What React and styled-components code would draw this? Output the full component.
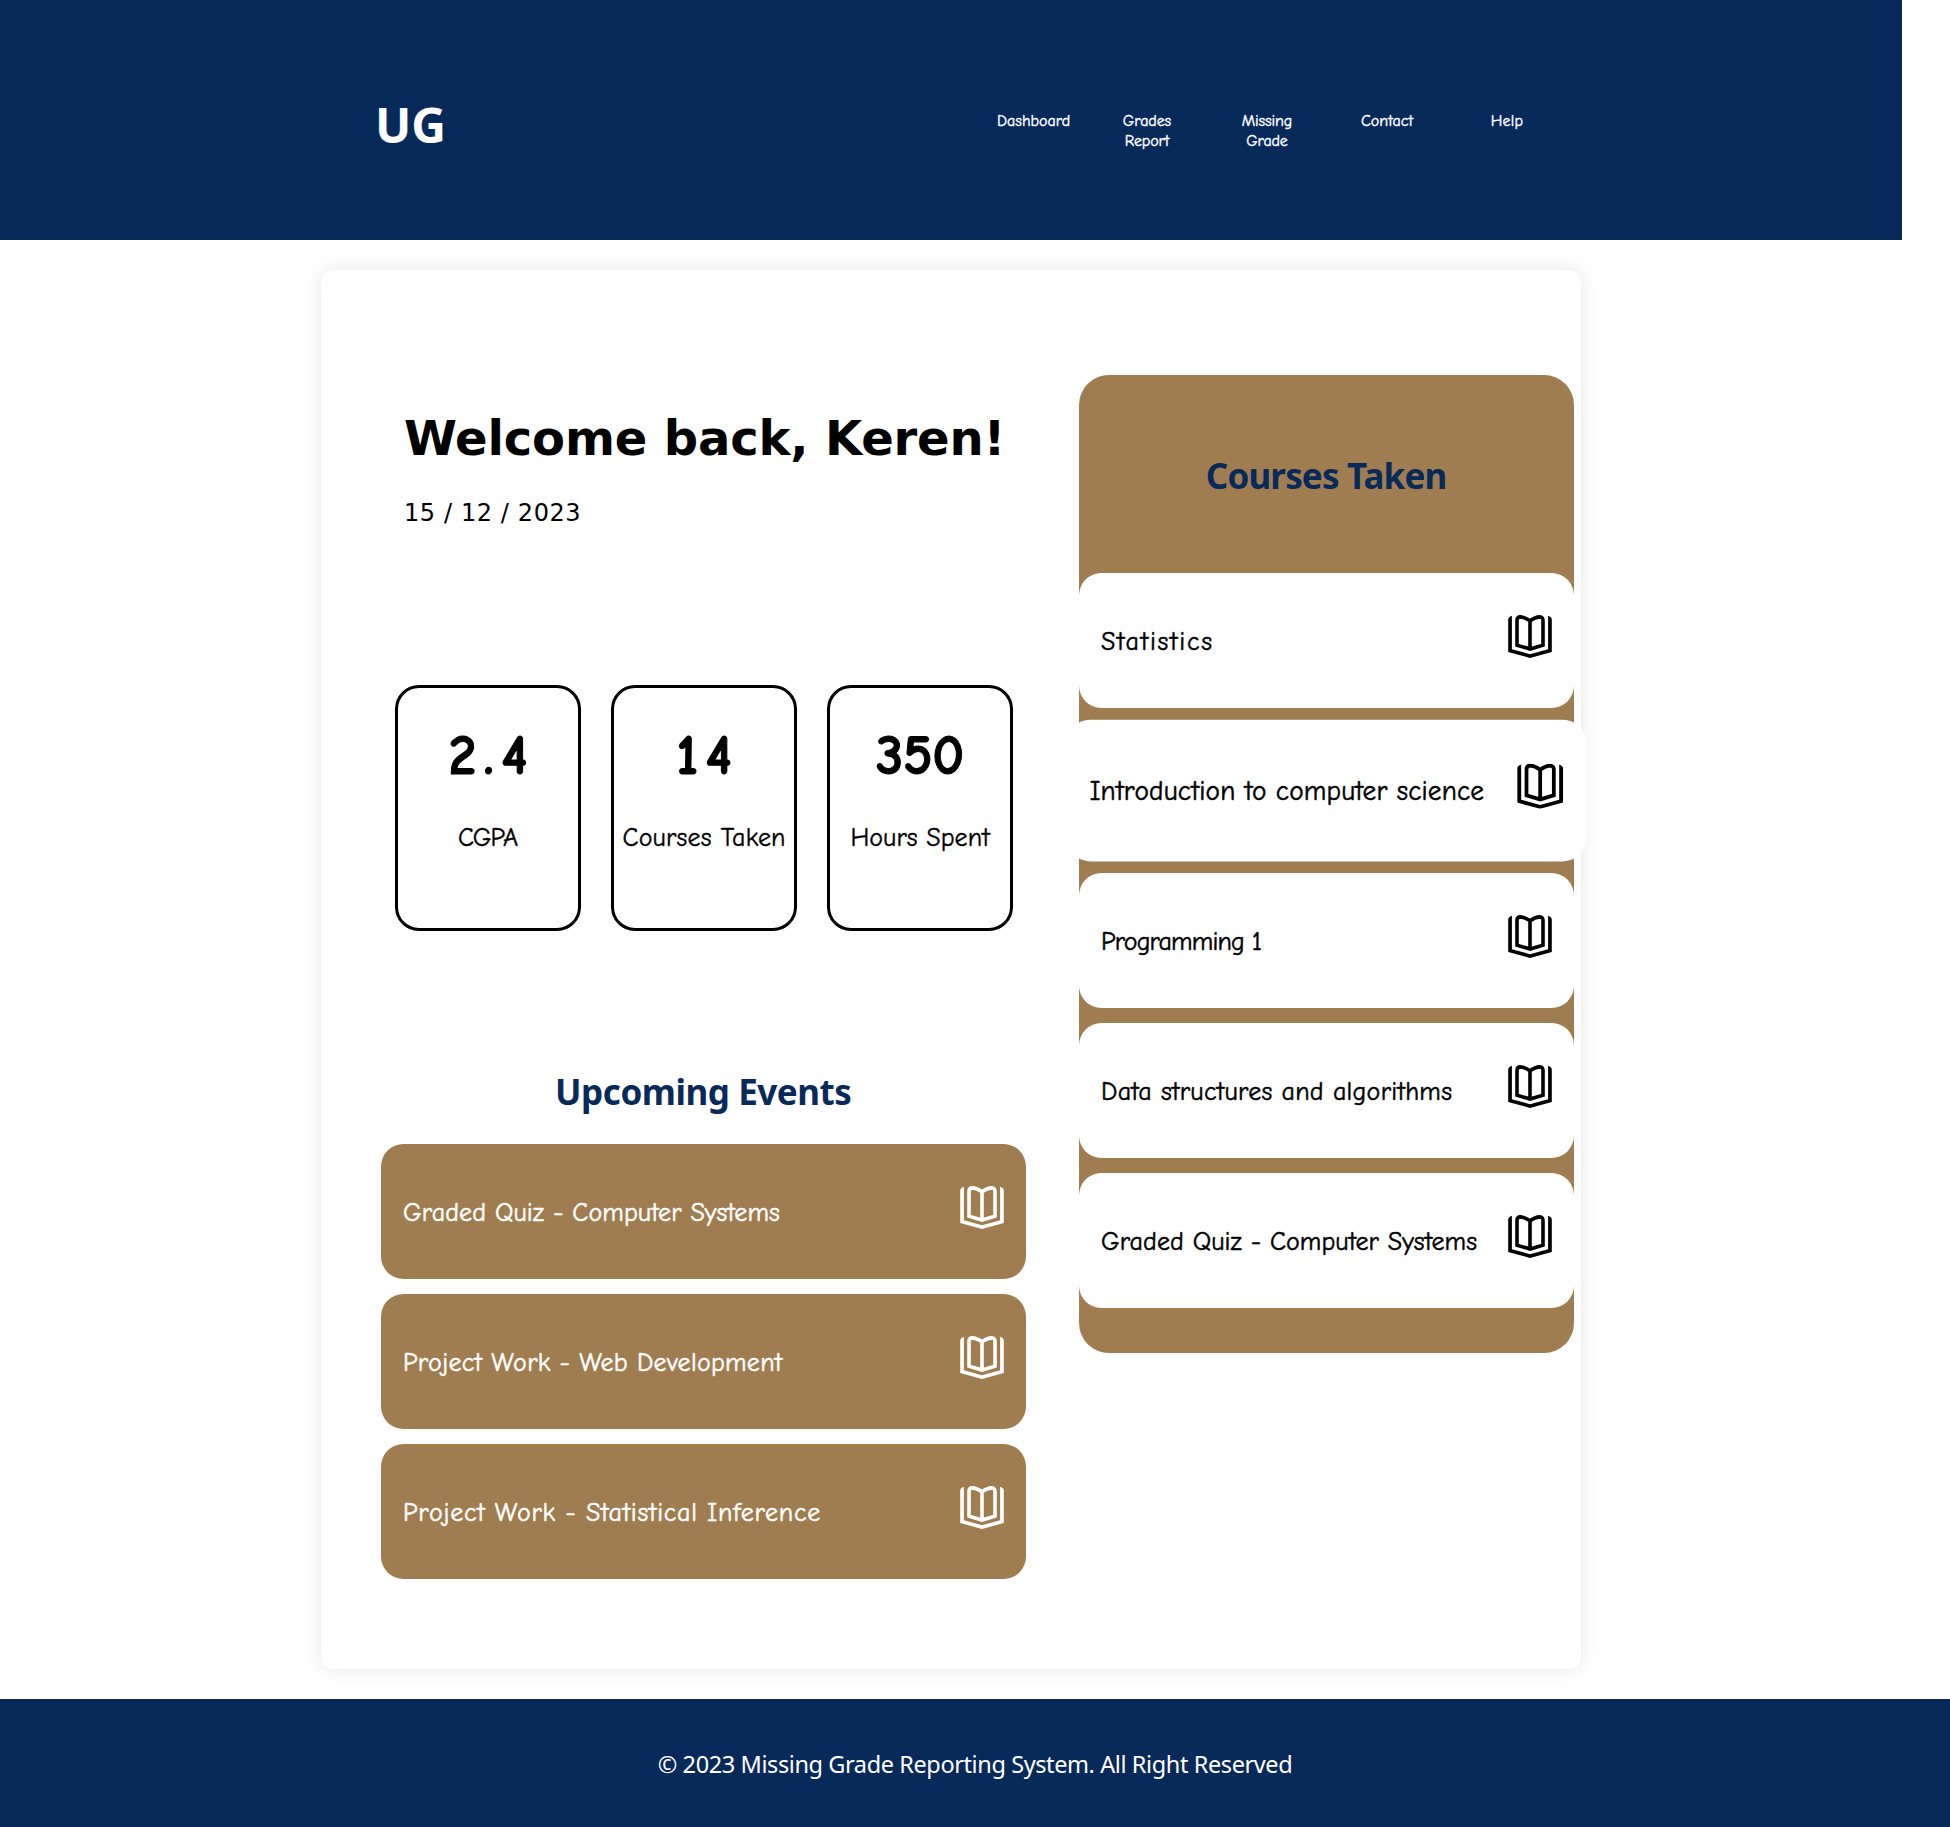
import React from "react";
import styled, { createGlobalStyle, css } from "styled-components";

const navy = "#082a5a";
const brown = "#a07d50";
const handFont = '"Comic Sans MS", "Comic Neue", "Noto Sans", sans-serif';
const uiFont = '"Segoe UI", "Noto Sans", "Open Sans", sans-serif';
const wideFont = 'Verdana, "DejaVu Sans", sans-serif';

const GlobalStyle = createGlobalStyle`
  *, *::before, *::after { box-sizing: border-box; }
  body { margin: 0; background: #fff; color: #000; font-family: ${uiFont}; }
  h1, h2, h3, p, ul { margin: 0; padding: 0; }
  ul { list-style: none; }
`;

/* Letter spacing adds a trailing gap; the indent keeps centred text centred. */
const tracking = css`
  letter-spacing: ${(p) => p.$track || 0}px;
  text-indent: ${(p) => p.$track || 0}px;
`;

const Page = styled.div`
  height: 1827px;
  display: flex;
  flex-direction: column;
`;

const Header = styled.header`
  width: 1902px;
  height: 240px;
  padding: 0 365px 0 375px;
  display: flex;
  justify-content: space-between;
  align-items: flex-start;
  background: ${navy};
  color: #fff;
`;

const Logo = styled.h1`
  margin-top: 93px;
  font: 700 48px/64px ${uiFont};
`;

const Nav = styled.ul`
  margin-top: 111px;
  display: flex;
  gap: 60px;
`;

const NavItem = styled.li`
  width: 60px;
  display: flex;
  justify-content: ${(p) => (p.$wide ? "flex-start" : "center")};
  text-align: center;
  font: 400 16px/20px ${handFont};
  -webkit-text-stroke: 0.4px currentColor;
  letter-spacing: ${(p) => p.$track || 0}px;
`;

const Card = styled.main`
  width: 1260px;
  height: 1399px;
  margin: 30px 0 30px 321px;
  padding: 105px 7px 0 60px;
  display: flex;
  justify-content: space-between;
  align-items: flex-start;
  background: #fff;
  border-radius: 12px;
  box-shadow: 0 0 20px rgba(0, 0, 0, 0.1);
`;

const Main = styled.div`
  width: 645px;
`;

const Welcome = styled.section`
  height: 310px;
  padding: 34px 0 0 23px;
  font-family: ${wideFont};
`;

const Greeting = styled.h1`
  font: 700 48px/58px ${wideFont};
  letter-spacing: -0.15px;
  white-space: nowrap;
`;

const DateLine = styled.p`
  margin-top: 31px;
  font: 400 24px/30px ${wideFont};
  letter-spacing: 0.6px;
`;

const Stats = styled.section`
  padding: 0 13px 0 14px;
  display: flex;
  gap: 30px;
`;

const Stat = styled.div`
  flex: 1;
  height: 246px;
  padding-top: 36px;
  border: 3px solid #000;
  border-radius: 24px;
  text-align: center;
`;

const StatValue = styled.h2`
  font: 700 56px/64px ${handFont};
  -webkit-text-stroke: 1px currentColor;
  ${tracking}
`;

const StatLabel = styled.p`
  margin-top: 34px;
  font: 400 26px/32px ${handFont};
  -webkit-text-stroke: 0.4px currentColor;
  ${tracking}
  white-space: nowrap;
`;

const Title = styled.h2`
  color: ${navy};
  font: 700 35px/48px ${uiFont};
  ${tracking}
  text-align: center;
`;

const Events = styled.section`
  margin-top: 137px;
`;

const List = styled.div`
  margin-top: ${(p) => p.$top}px;
  display: flex;
  flex-direction: column;
  gap: 15px;
`;

const Row = styled.article`
  height: 135px;
  padding: 0 22px;
  display: flex;
  align-items: center;
  justify-content: space-between;
  border-radius: 22.5px;
  background: ${(p) => (p.$dark ? brown : "#fff")};
  color: ${(p) => (p.$dark ? "#fff" : "#000")};
  ${(p) => p.$active && css`transform: scale(1.05);`}
`;

const RowText = styled.h3`
  padding-top: 2px;
  font: 400 26px/32px ${handFont};
  -webkit-text-stroke: 0.5px currentColor;
  letter-spacing: ${(p) => p.$track || 0}px;
  white-space: nowrap;
`;

const Glyph = styled.svg`
  width: 44px;
  height: 43px;
  margin-bottom: 8px;
  flex: none;
  fill: currentColor;
`;

const Pages = styled.path`
  fill: none;
  stroke: currentColor;
  stroke-width: 3.6;
`;

const Courses = styled.aside`
  width: 495px;
  height: 978px;
  padding-top: 77px;
  border-radius: 30px;
  background: ${brown};
`;

const Footer = styled.footer`
  height: 128px;
  display: flex;
  justify-content: center;
  padding-top: 47px;
  background: ${navy};
  color: #fff;
  font: 400 23.5px/36px ${uiFont};
  letter-spacing: -0.4px;
`;

const BookIcon = () => (
  <Glyph viewBox="0 0 44 43">
    <path d="M.2 4.4 Q.4 2 3.9 .8 V34.2 L22 39.2 L40.1 34.2 V.8 Q43.6 2 43.8 4.4 V37 L22 42.9 L.2 37 Z" />
    <Pages d="M22 5.8 C19 3.6 15 2 12.3 1.9 C9.9 1.9 9 3.2 9 5.6 V30.2 L22 34 L35 30.2 V5.6 C35 3.2 34.1 1.9 31.7 1.9 C29 2 25 3.6 22 5.8 V34" />
  </Glyph>
);

const nav = [
  { label: "Dashboard", wide: true },
  { label: "Grades Report", track: -0.1 },
  { label: "Missing Grade", track: -0.15 },
  { label: "Contact", track: 0.06 },
  { label: "Help", track: 0.2 },
];

const stats = [
  { value: "2.4", valueTrack: 7.3, label: "CGPA", labelTrack: -1 },
  { value: "14", valueTrack: 7.8, label: "Courses Taken", labelTrack: 0.2 },
  { value: "350", valueTrack: -0.4, label: "Hours Spent", labelTrack: 0.05 },
];

const events = [
  { label: "Graded Quiz - Computer Systems", track: 0.11 },
  { label: "Project Work - Web Development", track: 0.3 },
  { label: "Project Work - Statistical Inference", track: 0.74 },
];

const courses = [
  { label: "Statistics", track: 1.75 },
  { label: "Introduction to computer science", track: 0.17, active: true },
  { label: "Programming 1", track: -0.85 },
  { label: "Data structures and algorithms", track: 0.28 },
  { label: "Graded Quiz - Computer Systems", track: 0.08 },
];

export default function App() {
  return (
    <Page>
      <GlobalStyle />
      <Header>
        <Logo>UG</Logo>
        <Nav>
          {nav.map((item) => (
            <NavItem key={item.label} $track={item.track} $wide={item.wide}>
              {item.label}
            </NavItem>
          ))}
        </Nav>
      </Header>
      <Card>
        <Main>
          <Welcome>
            <Greeting>Welcome back, Keren!</Greeting>
            <DateLine>15 / 12 / 2023</DateLine>
          </Welcome>
          <Stats>
            {stats.map((s) => (
              <Stat key={s.label}>
                <StatValue $track={s.valueTrack}>{s.value}</StatValue>
                <StatLabel $track={s.labelTrack}>{s.label}</StatLabel>
              </Stat>
            ))}
          </Stats>
          <Events>
            <Title $track={-0.45}>Upcoming Events</Title>
            <List $top={28}>
              {events.map((e) => (
                <Row key={e.label} $dark>
                  <RowText $track={e.track}>{e.label}</RowText>
                  <BookIcon />
                </Row>
              ))}
            </List>
          </Events>
        </Main>
        <Courses>
          <Title $track={-0.85}>Courses Taken</Title>
          <List $top={73}>
            {courses.map((c) => (
              <Row key={c.label} $active={c.active}>
                <RowText $track={c.track}>{c.label}</RowText>
                <BookIcon />
              </Row>
            ))}
          </List>
        </Courses>
      </Card>
      <Footer>© 2023 Missing Grade Reporting System. All Right Reserved</Footer>
    </Page>
  );
}
